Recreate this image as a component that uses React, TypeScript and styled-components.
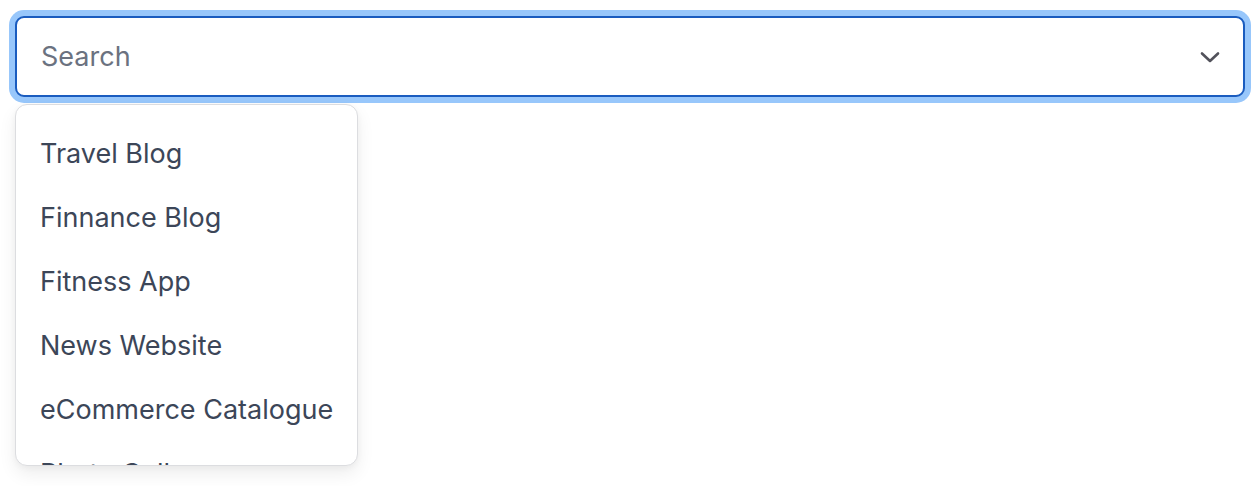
import * as React from 'react';
import styled, { createGlobalStyle } from 'styled-components';

const options = [
  'Travel Blog',
  'Finnance Blog',
  'Fitness App',
  'News Website',
  'eCommerce Catalogue',
  'Photo Gallery',
  'Recipe Book',
];

const GlobalStyle = createGlobalStyle`
  html, body {
    margin: 0;
    padding: 0;
    background: #ffffff;
    font-family: Inter, "Noto Sans", "Liberation Sans", sans-serif;
  }
`;

const Page = styled.div`
  min-height: 486px;
  box-sizing: border-box;
  padding: 16px 15px 0;
`;

const Combobox = styled.div`
  display: flex;
  flex-direction: column;
  align-items: flex-start;
  gap: 7px;
`;

const Control = styled.div`
  align-self: stretch;
  display: flex;
  align-items: center;
  height: 81px;
  box-sizing: border-box;
  padding: 0 22px 0 24px;
  border: 2px solid #1a5cbf;
  border-radius: 9px;
  box-shadow: 0 0 0 6px #98c7fb;
  background: #ffffff;
`;

const Input = styled.input`
  flex: 1;
  border: none;
  outline: none;
  background: transparent;
  font-family: inherit;
  font-size: 27px;
  color: #374151;
  padding: 0;

  &::placeholder {
    color: #6b7280;
  }
`;

const Chevron = styled.svg`
  width: 22px;
  height: 14px;
  color: #52525b;
  flex-shrink: 0;
`;

const Menu = styled.ul`
  width: 343px;
  max-height: 362px;
  box-sizing: border-box;
  margin: 0;
  padding: 16px 0 0;
  list-style: none;
  overflow: hidden;
  background: #ffffff;
  border: 1px solid #dcdde0;
  border-radius: 12px;
  box-shadow: 0 8px 18px rgba(0, 0, 0, 0.07), 0 2px 6px rgba(0, 0, 0, 0.04);
`;

const Option = styled.li`
  display: flex;
  align-items: center;
  height: 64px;
  padding: 0 24px;
  font-size: 27px;
  color: #3c4658;
  white-space: nowrap;
`;

export default function App() {
  return (
    <Page>
      <GlobalStyle />
      <Combobox>
        <Control>
          <Input placeholder="Search" />
          <Chevron viewBox="0 0 22 14" fill="none">
            <path d="M3 3.5l8 7.5 8-7.5" stroke="currentColor" strokeWidth="2.6" strokeLinecap="round" strokeLinejoin="round" />
          </Chevron>
        </Control>
        <Menu>
          {options.map((o) => (
            <Option key={o}>{o}</Option>
          ))}
        </Menu>
      </Combobox>
    </Page>
  );
}
